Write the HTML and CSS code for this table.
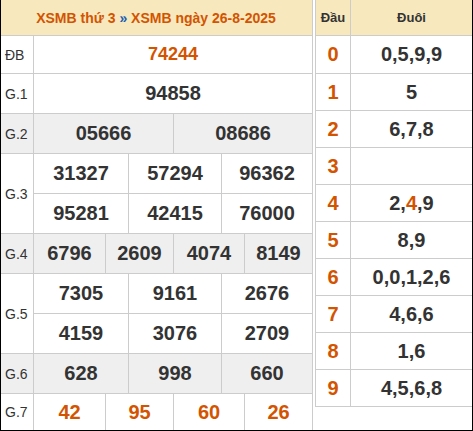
FILE: index.html
```html
<!DOCTYPE html>
<html lang="vi">
<head>
<meta charset="utf-8">
<title>XSMB 26-8-2025</title>
<link rel="stylesheet" href="styles.css">
</head>
<body>
<div class="page">
  <div class="board">
    <div class="title"><span class="ttext">XSMB thứ 3 <span class="sep">»</span> XSMB ngày 26-8-2025</span></div>

    <div class="row h38">
      <div class="label">ĐB</div>
      <div class="cells g1"><div class="c end special">74244</div></div>
    </div>
    <div class="row">
      <div class="label">G.1</div>
      <div class="cells g1"><div class="c end">94858</div></div>
    </div>
    <div class="row gray">
      <div class="label">G.2</div>
      <div class="cells g2"><div class="c">05666</div><div class="c end">08686</div></div>
    </div>
    <div class="row">
      <div class="label">G.3</div>
      <div class="cells g3">
        <div class="c">31327</div><div class="c">57294</div><div class="c end">96362</div>
        <div class="c">95281</div><div class="c">42415</div><div class="c end">76000</div>
      </div>
    </div>
    <div class="row gray">
      <div class="label">G.4</div>
      <div class="cells g4"><div class="c">6796</div><div class="c">2609</div><div class="c">4074</div><div class="c end">8149</div></div>
    </div>
    <div class="row">
      <div class="label">G.5</div>
      <div class="cells g3">
        <div class="c">7305</div><div class="c">9161</div><div class="c end">2676</div>
        <div class="c">4159</div><div class="c">3076</div><div class="c end">2709</div>
      </div>
    </div>
    <div class="row gray">
      <div class="label">G.6</div>
      <div class="cells g3"><div class="c">628</div><div class="c">998</div><div class="c end">660</div></div>
    </div>
    <div class="row h37">
      <div class="label">G.7</div>
      <div class="cells g4 red"><div class="c">42</div><div class="c">95</div><div class="c">60</div><div class="c end">26</div></div>
    </div>
  </div>

  <div class="loto">
    <div class="lrow lhead"><div class="hd">Đầu</div><div class="tl">Đuôi</div></div>
    <div class="lrow first"><div class="hd">0</div><div class="tl">0,5,9,9</div></div>
    <div class="lrow"><div class="hd">1</div><div class="tl">5</div></div>
    <div class="lrow"><div class="hd">2</div><div class="tl">6,7,8</div></div>
    <div class="lrow"><div class="hd">3</div><div class="tl"></div></div>
    <div class="lrow"><div class="hd">4</div><div class="tl">2,<span class="hl">4</span>,9</div></div>
    <div class="lrow"><div class="hd">5</div><div class="tl">8,9</div></div>
    <div class="lrow"><div class="hd">6</div><div class="tl">0,0,1,2,6</div></div>
    <div class="lrow"><div class="hd">7</div><div class="tl">4,6,6</div></div>
    <div class="lrow"><div class="hd">8</div><div class="tl">1,6</div></div>
    <div class="lrow"><div class="hd">9</div><div class="tl">4,5,6,8</div></div>
  </div>
</div>
</body>
</html>
```

FILE: styles.css
```css
* { box-sizing: border-box; }
html, body { margin: 0; padding: 0; background: #fff; }
body { font-family: "Liberation Sans", Arial, sans-serif; color: #333; }

.page {
  position: relative;
  width: 473px;
  height: 431px;
  display: flex;
  align-items: flex-start;
  gap: 2px;
  overflow: hidden;
}
.page::after {
  content: "";
  position: absolute;
  inset: 0;
  border: 1px solid #000;
  border-top: none;
  pointer-events: none;
}

/* left board */
.board {
  width: 313px;
  height: 431px;
  border-right: 1px solid #ccc;
  flex: none;
}
.title {
  height: 36px;
  background: #f7e8be;
  border-bottom: 1px solid #ccc;
  display: flex;
  align-items: center;
  justify-content: center;
  font-size: 14px;
  font-weight: bold;
  color: #d35400;
  white-space: nowrap;
}
.title .sep { color: #1d5fb4; }

.row { display: flex; }
.row.gray { background: #efefef; }
.label {
  width: 34px;
  flex: none;
  border-right: 1px solid #ccc;
  border-bottom: 1px solid #ccc;
  display: flex;
  align-items: center;
  padding-left: 5px;
  font-size: 14px;
}
.cells { display: grid; flex: 1; }
.g1 { grid-template-columns: 278px; }
.g2 { grid-template-columns: 140px 138px; }
.g3 { grid-template-columns: 95px 93px 90px; }
.g4 { grid-template-columns: 72px 68px 71px 67px; }
.c {
  height: 40px;
  border-right: 1px solid #ccc;
  border-bottom: 1px solid #ccc;
  display: flex;
  align-items: center;
  justify-content: center;
  font-size: 20px;
  font-weight: bold;
}
.c.end { border-right: none; }
.h38 .c { height: 38px; }
.h37 .c { height: 37px; }
.special { color: #d35400; font-size: 18px; }
.red .c { color: #d35400; }

/* right loto table */
.loto {
  width: 158px;
  flex: none;
  border-left: 1px solid #ccc;
}
.lrow {
  display: flex;
  height: 37px;
  border-bottom: 1px solid #ccc;
}
.lrow.lhead { height: 36px; background: #f7e8be; }
.lrow.first { height: 38px; }
.hd {
  width: 35px;
  flex: none;
  border-right: 1px solid #ccc;
  display: flex;
  align-items: center;
  justify-content: center;
  font-size: 20px;
  font-weight: bold;
  color: #d35400;
}
.tl {
  flex: 1;
  display: flex;
  align-items: center;
  justify-content: center;
  font-size: 20px;
  font-weight: bold;
  color: #333;
  border-right: 1px solid #ccc;
}
.lhead .hd, .lhead .tl { font-size: 13px; color: #333; }
.hl { color: #d35400; }
```
